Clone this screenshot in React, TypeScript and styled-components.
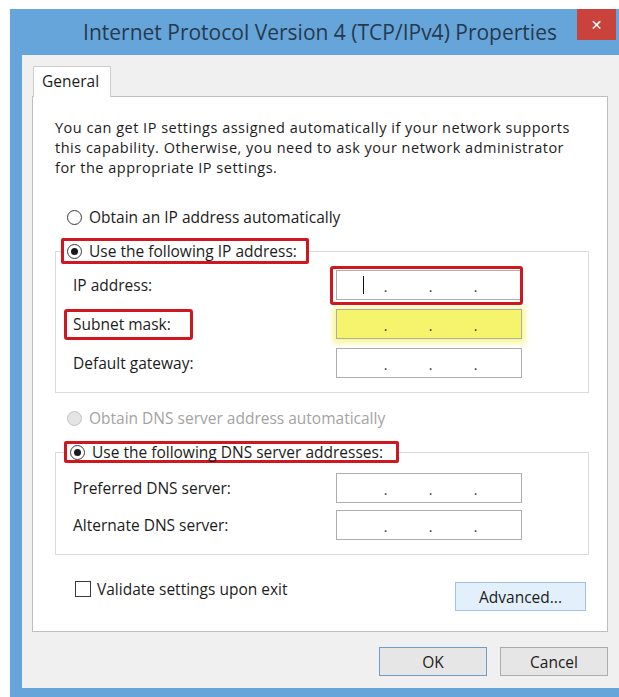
import React from "react";
import styled, { createGlobalStyle } from "styled-components";

const GlobalStyle = createGlobalStyle`
  html, body {
    margin: 0;
    padding: 0;
    background: #ffffff;
    overflow: hidden;
  }
  body {
    font-family: "Open Sans", "Noto Sans", "DejaVu Sans", sans-serif;
    color: #1c1c1c;
  }
`;

const Page = styled.div`
  width: 619px;
  height: 697px;
  overflow: hidden;
  box-sizing: border-box;
  padding: 9px 0 0 10px;
`;

const Window = styled.div`
  width: 620px;
  background: #66a5d9;
  display: flex;
  flex-direction: column;
  padding-bottom: 12px;
`;

const TitleBar = styled.div`
  height: 46px;
  display: grid;
  grid-template-columns: 1fr auto 1fr;
  align-items: start;
`;

const TitleText = styled.div`
  grid-column: 2;
  font-size: 21px;
  line-height: 46px;
  color: #27394e;
  white-space: nowrap;
`;

const CloseButton = styled.div`
  grid-column: 3;
  justify-self: end;
  margin-right: 14px;
  width: 39px;
  height: 31px;
  background: #c9423c;
  color: #ffffff;
  display: flex;
  align-items: center;
  justify-content: center;
  font-family: "DejaVu Sans", sans-serif;
  font-size: 14px;
  font-weight: bold;
`;

const Body = styled.div`
  margin: 0 11px 0 12px;
  background: #f0f0f0;
  padding: 11px 11px 12px 10px;
  display: flex;
  flex-direction: column;
`;

const TabStrip = styled.div`
  display: flex;
  padding-left: 1px;
`;

const Tab = styled.div`
  position: relative;
  z-index: 1;
  width: 78px;
  height: 31px;
  box-sizing: border-box;
  border: 1px solid #cdcdcd;
  border-bottom: none;
  background: #ffffff;
  margin-bottom: -1px;
  padding-left: 8px;
  font-size: 15.5px;
  line-height: 29px;
`;

const Panel = styled.div`
  border: 1px solid #bfbfbf;
  background: #ffffff;
  padding: 21px 18px 20px 22px;
  display: flex;
  flex-direction: column;
`;

const Intro = styled.p`
  margin: 0;
  font-size: 14.5px;
  letter-spacing: 0.5px;
  line-height: 20px;
  white-space: nowrap;
`;

const OptionRow = styled.div<{ $disabled?: boolean; $top: number }>`
  margin: ${(p) => p.$top}px 0 0 12px;
  height: 20px;
  display: flex;
  align-items: center;
  gap: 7px;
  font-size: 15.5px;
  color: ${(p) => (p.$disabled ? "#a3a3a3" : "#1c1c1c")};
`;

const Radio = styled.span<{ $checked?: boolean; $disabled?: boolean }>`
  width: 15px;
  height: 15px;
  box-sizing: border-box;
  border-radius: 50%;
  border: 1px solid ${(p) => (p.$disabled ? "#c4c4c4" : "#3a3a3a")};
  background: ${(p) => (p.$disabled ? "#e4e4e4" : "#ffffff")};
  display: flex;
  align-items: center;
  justify-content: center;
  flex: none;

  &::before {
    content: "";
    width: 7px;
    height: 7px;
    border-radius: 50%;
    background: #1a1a1a;
    display: ${(p) => (p.$checked ? "block" : "none")};
  }
`;

const Group = styled.fieldset<{ $top: number }>`
  margin: ${(p) => p.$top}px 0 0 0;
  padding: 0;
  border: 1px solid #dadada;
  min-width: 0;
`;

const Legend = styled.legend<{ $left: number; $padY: number; $padRight: number }>`
  margin-left: ${(p) => p.$left}px;
  padding: ${(p) => p.$padY}px ${(p) => p.$padRight}px ${(p) => p.$padY}px 3px;
  border: 3px solid #d0161f;
  border-radius: 2px;
  display: flex;
  align-items: center;
  gap: 7px;
  font-size: 15.5px;
  line-height: 16px;
  white-space: nowrap;
`;

const Fields = styled.div<{ $padTop: number; $gap: number }>`
  display: grid;
  grid-template-columns: 263px 186px;
  row-gap: ${(p) => p.$gap}px;
  padding: ${(p) => p.$padTop}px 0 14px 17px;
`;

const Label = styled.div`
  font-size: 15.5px;
  line-height: 30px;
  height: 30px;
  white-space: nowrap;
`;

/* hand-drawn red frame laid over a field or label */
const Marked = styled.div<{ $t: number; $r: number; $b: number; $l: number; $w?: number }>`
  position: relative;
  width: ${(p) => (p.$w ? `${p.$w}px` : "auto")};

  &::after {
    content: "";
    position: absolute;
    top: ${(p) => -p.$t}px;
    right: ${(p) => -p.$r}px;
    bottom: ${(p) => -p.$b}px;
    left: ${(p) => -p.$l}px;
    border: 3px solid #d0161f;
    border-radius: 3px;
    pointer-events: none;
  }
`;

const IpField = styled.div<{ $highlight?: boolean }>`
  height: 30px;
  box-sizing: border-box;
  border: 1px solid #adadad;
  background: ${(p) => (p.$highlight ? "#f5f46c" : "#ffffff")};
  box-shadow: ${(p) =>
    p.$highlight ? "0 1px 5px 3px rgba(246, 244, 110, 0.75)" : "none"};
  display: flex;
  align-items: center;
  padding-left: 4px;
  font-size: 14px;
`;

const Octet = styled.span`
  width: 44px;
  display: flex;
  justify-content: center;
  align-items: center;
`;

const Dot = styled.span`
  width: 1px;
  display: flex;
  justify-content: center;
  line-height: 14px;
  padding-top: 4px;
  color: #333333;
`;

const Caret = styled.span`
  width: 1px;
  height: 18px;
  background: #111111;
`;

const BottomRow = styled.div`
  margin: 25px 3px 0 20px;
  display: flex;
  justify-content: space-between;
  align-items: flex-start;
`;

const CheckLabel = styled.label`
  display: flex;
  align-items: center;
  gap: 6px;
  font-size: 15.5px;
  line-height: 18px;
`;

const CheckBox = styled.span`
  width: 16px;
  height: 16px;
  box-sizing: border-box;
  border: 1px solid #3a3a3a;
  background: #ffffff;
`;

const Button = styled.div<{ $variant?: "accent" | "default" | "plain"; $width: number }>`
  width: ${(p) => p.$width}px;
  height: 29px;
  box-sizing: border-box;
  display: flex;
  align-items: center;
  justify-content: center;
  font-size: 15.5px;
  border: 1px solid
    ${(p) =>
      p.$variant === "accent"
        ? "#9ec4e6"
        : p.$variant === "default"
        ? "#6e9fcb"
        : "#adadad"};
  background: ${(p) => (p.$variant === "accent" ? "#e3f0fb" : "#e6e6e6")};
`;

const AdvancedButton = styled(Button)`
  margin-top: 2px;
`;

const Footer = styled.div`
  margin-top: 15px;
  display: flex;
  justify-content: flex-end;
  gap: 13px;
`;

const IpValue: React.FC<{ caret?: boolean }> = ({ caret }) => (
  <>
    <Octet>{caret ? <Caret /> : null}</Octet>
    <Dot>.</Dot>
    <Octet />
    <Dot>.</Dot>
    <Octet />
    <Dot>.</Dot>
    <Octet />
  </>
);

export default function App() {
  return (
    <Page>
      <GlobalStyle />
      <Window>
        <TitleBar>
          <TitleText>Internet Protocol Version 4 (TCP/IPv4) Properties</TitleText>
          <CloseButton>✕</CloseButton>
        </TitleBar>
        <Body>
          <TabStrip>
            <Tab>General</Tab>
          </TabStrip>
          <Panel>
            <Intro>
              You can get IP settings assigned automatically if your network supports
              <br />
              this capability. Otherwise, you need to ask your network administrator
              <br />
              for the appropriate IP settings.
            </Intro>

            <OptionRow $top={29}>
              <Radio />
              Obtain an IP address automatically
            </OptionRow>

            <Group $top={11}>
              <Legend $left={5} $padY={2} $padRight={9}>
                <Radio $checked />
                Use the following IP address:
              </Legend>
              <Fields $padTop={6} $gap={9}>
                <Label>IP address:</Label>
                <Marked $t={4} $r={1} $b={5} $l={6}>
                  <IpField>
                    <IpValue caret />
                  </IpField>
                </Marked>
                <Marked $t={0} $r={0} $b={1} $l={9} $w={120}>
                  <Label>Subnet mask:</Label>
                </Marked>
                <IpField $highlight>
                  <IpValue />
                </IpField>
                <Label>Default gateway:</Label>
                <IpField>
                  <IpValue />
                </IpField>
              </Fields>
            </Group>

            <OptionRow $disabled $top={15}>
              <Radio $disabled />
              Obtain DNS server address automatically
            </OptionRow>

            <Group $top={13}>
              <Legend $left={8} $padY={0} $padRight={13}>
                <Radio $checked />
                Use the following DNS server addresses:
              </Legend>
              <Fields $padTop={10} $gap={7}>
                <Label>Preferred DNS server:</Label>
                <IpField>
                  <IpValue />
                </IpField>
                <Label>Alternate DNS server:</Label>
                <IpField>
                  <IpValue />
                </IpField>
              </Fields>
            </Group>

            <BottomRow>
              <CheckLabel>
                <CheckBox />
                Validate settings upon exit
              </CheckLabel>
              <AdvancedButton $variant="accent" $width={131}>
                Advanced...
              </AdvancedButton>
            </BottomRow>
          </Panel>
          <Footer>
            <Button $variant="default" $width={108}>
              OK
            </Button>
            <Button $variant="plain" $width={108}>
              Cancel
            </Button>
          </Footer>
        </Body>
      </Window>
    </Page>
  );
}
